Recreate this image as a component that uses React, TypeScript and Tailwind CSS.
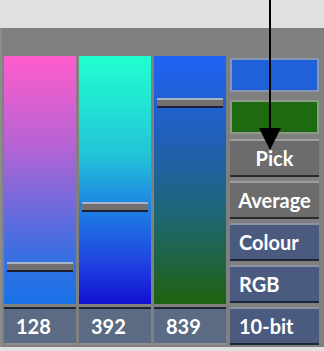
const FONT = { fontFamily: 'Lato, "Liberation Sans", sans-serif' }

type Bar = { value: string; gradient: string; handleTop: number }

const BARS: Bar[] = [
  { value: '128', gradient: 'bg-[linear-gradient(to_bottom,#ff5ccc_0%,#b863d4_35%,#3a6fe2_80%,#1872e8_100%)]', handleTop: 206 },
  { value: '392', gradient: 'bg-[linear-gradient(to_bottom,#20ffd0_0%,#22c4d8_40%,#1e7ee4_62%,#1f3ee0_85%,#1010d2_100%)]', handleTop: 146 },
  { value: '839', gradient: 'bg-[linear-gradient(to_bottom,#2062f6_0%,#2060b4_35%,#1f6672_65%,#1e6210_100%)]', handleTop: 42 },
]

function ColourBar({ bar }: { bar: Bar }) {
  return (
    <div className="flex w-[72px] flex-col gap-[3px]">
      <div className={`relative h-[248px] ${bar.gradient}`}>
        <div
          className="absolute left-[3px] right-[3px] h-[10px] border-t-2 border-b-2 border-t-[#a8b4c8] border-b-[#1c2030] bg-[#747070]"
          style={{ top: bar.handleTop }}
        />
      </div>
      <div className="flex h-[38px] items-center border-t-2 border-b-2 border-t-[#1c2430] border-b-[#8c8c8c] bg-[#5b6b83] pl-[12px] text-[20px] font-bold text-white" style={FONT}>
        {bar.value}
      </div>
    </div>
  )
}

function GreyButton({ label }: { label: string }) {
  return (
    <div className="flex h-[38px] items-center justify-center border-t-2 border-b-2 border-t-[#9e9e9e] border-b-[#2a2a2a] bg-[#6c6c6c] text-[20px] font-bold text-white" style={FONT}>
      {label}
    </div>
  )
}

function BlueButton({ label }: { label: string }) {
  return (
    <div className="flex h-[38px] items-center border-t-2 border-b-2 border-t-[#8a92a4] border-b-[#1c2438] bg-[#4b5b80] pl-[9px] text-[20px] font-bold text-white" style={FONT}>
      {label}
    </div>
  )
}

export default function App() {
  return (
    <div className="relative h-[351px] w-[324px] overflow-hidden bg-[#e0e0e0]">
      <div className="mt-[28px] flex h-[319px] gap-[3px] border-l-2 border-[#8c8c8c] bg-[#808080] pl-[2px] pr-[4px] pt-[28px]">
        {BARS.map((bar) => (
          <ColourBar key={bar.value} bar={bar} />
        ))}
        <div className="ml-[1px] flex w-[89px] flex-col">
          <div className="mt-[2px] h-[34px] border-2 border-[#8896b2] bg-[#2060d8]" />
          <div className="mt-[8px] h-[34px] border-2 border-[#8c9a88] bg-[#1e6a10]" />
          <div className="mt-[5px] flex flex-col gap-[4px]">
            <GreyButton label="Pick" />
            <GreyButton label="Average" />
            <BlueButton label="Colour" />
            <BlueButton label="RGB" />
            <BlueButton label="10-bit" />
          </div>
        </div>
      </div>
      <svg className="absolute left-0 top-0" width="324" height="160" viewBox="0 0 324 160">
        <line x1="270" y1="0" x2="270" y2="132" stroke="#000" strokeWidth="2" />
        <polygon points="259,128 281,128 270,150" fill="#000" />
      </svg>
    </div>
  )
}
